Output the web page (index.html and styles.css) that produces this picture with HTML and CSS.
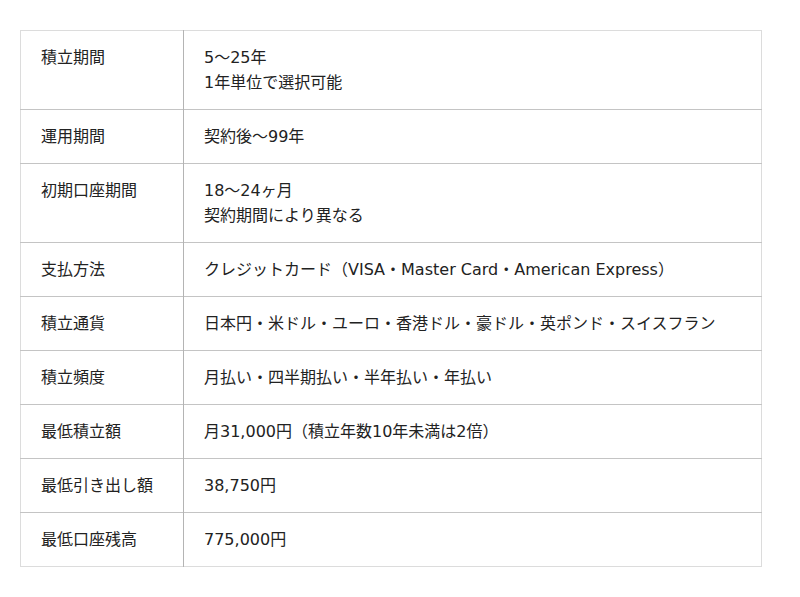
FILE: index.html
```html
<!DOCTYPE html>
<html lang="ja">
<head>
<meta charset="utf-8">
<link rel="stylesheet" href="styles.css">
</head>
<body>
<table class="spec">
<tbody>
<tr><th>積立期間</th><td>5〜25年<br>1年単位で選択可能</td></tr>
<tr><th>運用期間</th><td>契約後〜99年</td></tr>
<tr><th>初期口座期間</th><td>18〜24ヶ月<br>契約期間により異なる</td></tr>
<tr><th>支払方法</th><td>クレジットカード（VISA・Master Card・American Express）</td></tr>
<tr><th>積立通貨</th><td>日本円・米ドル・ユーロ・香港ドル・豪ドル・英ポンド・スイスフラン</td></tr>
<tr><th>積立頻度</th><td>月払い・四半期払い・半年払い・年払い</td></tr>
<tr><th>最低積立額</th><td>月31,000円（積立年数10年未満は2倍）</td></tr>
<tr><th>最低引き出し額</th><td>38,750円</td></tr>
<tr><th>最低口座残高</th><td>775,000円</td></tr>
</tbody>
</table>
</body>
</html>
```
FILE: styles.css
```css
html, body {
  margin: 0;
  padding: 0;
  background: #fff;
}
body {
  padding: 30px 0 0 20px;
  font-family: "DejaVu Sans", "Noto Sans CJK JP", sans-serif;
  font-size: 16px;
  color: #222;
}
.spec {
  width: 742px;
  border-collapse: collapse;
  border: 1px solid #dcdcdc;
}
.spec th,
.spec td {
  text-align: left;
  vertical-align: top;
  font-weight: normal;
  line-height: 25px;
  padding: 14px 20px 14px 20px;
  border-top: 1px solid #c4c4c4;
}
.spec tr:first-child th,
.spec tr:first-child td {
  border-top: 1px solid #dcdcdc;
}
.spec th {
  width: 122px;
  border-right: 1px solid #b4b4b4;
}
```
